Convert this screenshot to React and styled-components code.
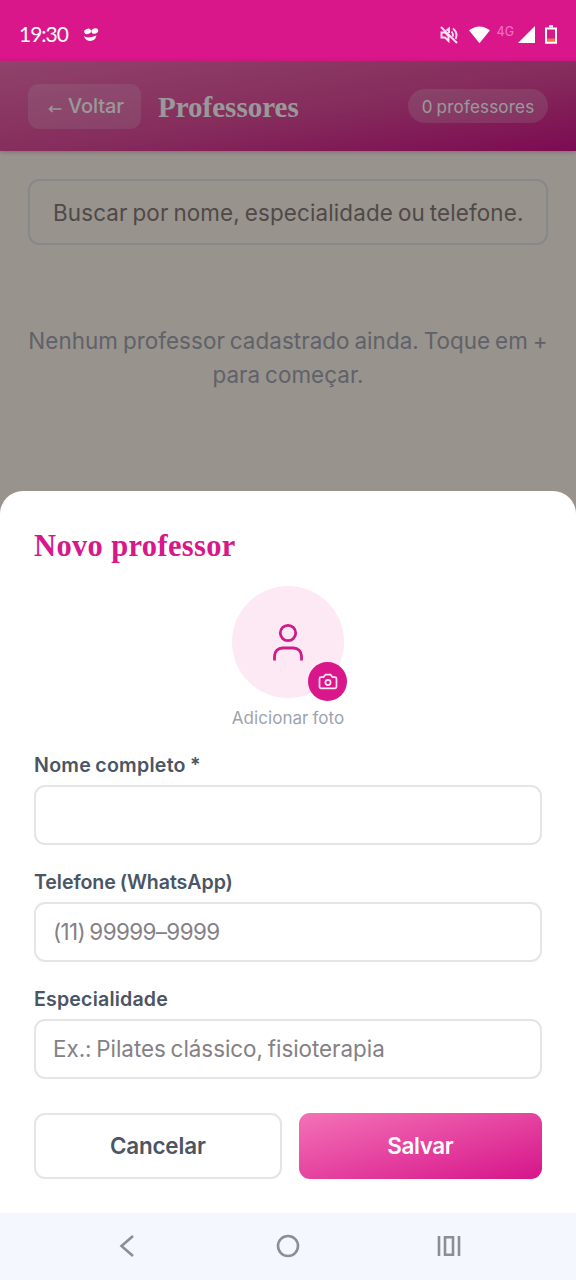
import React from "react";
import styled, { createGlobalStyle } from "styled-components";

const Global = createGlobalStyle`
  * { box-sizing: border-box; }
  body { margin: 0; font-family: Inter, "Liberation Sans", sans-serif; }
`;
const Screen = styled.div`
  width: 576px; height: 1280px; display: flex; flex-direction: column; overflow: hidden; background: #fff;
`;
const StatusBar = styled.div`
  height: 61px; background: #d9168a; color: #fff; display: flex; align-items: center;
  justify-content: space-between; padding: 8px 19px 0 19px;
`;
const StatusGroup = styled.div`display: flex; align-items: center;`;
const Clock = styled.span`
  font: 400 21px/24px Lato, sans-serif; letter-spacing: -1px; margin-right: 15px; padding-bottom: 1px;
`;
const Network = styled.span`
  font: 500 12.5px Inter, sans-serif; color: #f06cba; margin: -7px 4px 0 6px;
`;
const WifiIcon = styled.svg`margin-left: 11px;`;
const BatteryIcon = styled.svg`margin-left: 10px;`;
const Body = styled.main`flex: 1; position: relative; background: #fdf5ec;`;
const Header = styled.header`
  height: 90px; display: flex; align-items: center; padding: 0 28px;
  background: linear-gradient(to bottom right, #f070b2 0%, #de4a9a 55%, #d01288 100%);
  box-shadow: 0 1px 4px rgba(120, 20, 80, 0.3);
  color: #fff;
`;
const BackButton = styled.button`
  width: 113px; height: 45px; border: 0; border-radius: 11px; background: rgba(255,255,255,.18); color: #fff;
  display: flex; align-items: center; justify-content: center; gap: 6px; padding: 0 0 0 3px;
  font: 500 20px Inter, sans-serif; letter-spacing: -0.1px;
`;
const BackArrow = styled.svg`margin-top: 6px;`;
const PageTitle = styled.h1`
  margin: 0 auto 0 17px; padding-top: 2px; font: 700 29px "Liberation Serif", serif; letter-spacing: 0;
`;
const Count = styled.span`
  height: 34px; width: 140px; border-radius: 17px; background: rgba(255,255,255,.2);
  display: flex; align-items: center; justify-content: center; font-size: 17px; white-space: nowrap;
  padding-top: 1px; letter-spacing: 0.2px; word-spacing: -1px;
`;
const Content = styled.section`padding: 28px;`;
const SearchBox = styled.div`
  height: 66px; border: 2px solid #e0e3e7; border-radius: 11px; padding: 1px 16px 0 23px; display: flex; align-items: center;
  color: #857b77; font-size: 22.4px; white-space: nowrap; letter-spacing: 0.14px; word-spacing: -1.5px;
`;
const Empty = styled.p`
  margin: 79px -10px 0; text-align: center; color: #a0a3b0; font-size: 22.4px;
  line-height: 34px; letter-spacing: 0.07px; word-spacing: -1.5px;
`;
const Overlay = styled.div`
  position: absolute; inset: 0; background: rgba(0,0,0,.4); display: flex; align-items: flex-end;
`;
const Sheet = styled.div`
  width: 100%; height: 722px; background: #fff; border-radius: 23px 23px 0 0; padding: 34px 34px 0;
  display: flex; flex-direction: column;
`;
const SheetTitle = styled.h2`
  margin: 0; height: 41px; color: #d6188a; font: 700 30.5px/42px "Liberation Serif", serif; letter-spacing: 0.35px;
`;
const Photo = styled.div`
  margin-top: 20px; display: flex; flex-direction: column; align-items: center; height: 143px;
`;
const Avatar = styled.div`
  position: relative; width: 112px; height: 112px; border-radius: 50%; background: #fce9f3;
  display: flex; align-items: center; justify-content: center; flex: none;
`;
const Badge = styled.div`
  position: absolute; right: -3px; bottom: -3px; width: 39px; height: 39px; border-radius: 50%; background: #d9168a;
  display: flex; align-items: center; justify-content: center;
`;
const PhotoLabel = styled.span`
  margin-top: 8px; color: #9ca3af; font-size: 17px; line-height: 24px; letter-spacing: 0.05px; word-spacing: -1px;
`;
const Field = styled.label`display: block; height: 117px; padding-top: 23px;`;
const Label = styled.div`
  color: #4b5563; font-size: 19.6px; font-weight: 600; line-height: 26px; height: 33px;
  letter-spacing: ${p => p.$track}px; word-spacing: -1px;
`;
const Input = styled.div`
  height: 60px; border: 2px solid #e5e5e8; border-radius: 11px; padding: 0 17px 1px; display: flex; align-items: center;
  color: #858085; font-size: 22.4px; white-space: nowrap;
  letter-spacing: ${p => p.$track || 0}px; word-spacing: -1.5px;
`;
const Actions = styled.div`display: flex; gap: 17px; margin-top: 33px;`;
const Button = styled.button`
  height: 66px; width: ${p => (p.$primary ? 244 : 248)}px; border-radius: 11px;
  border: ${p => (p.$primary ? "0" : "2px solid #e5e5e8")};
  background: ${p => (p.$primary ? "linear-gradient(to bottom right, #f472b6, #d6158a)" : "#fff")};
  color: ${p => (p.$primary ? "#fff" : "#4b5563")};
  font: 600 22.4px Inter, sans-serif;
  letter-spacing: ${p => (p.$primary ? -0.4 : -0.15)}px; padding: 0 0 1px;
`;
const NavBar = styled.nav`
  height: 67px; background: #f4f8fe; display: flex; align-items: center; justify-content: space-between; padding: 0 112px 1px;
`;

export default function App() {
  return (
    <>
      <Global />
      <Screen>
        <StatusBar>
          <StatusGroup>
            <Clock>19:30</Clock>
            <svg width="16" height="16" viewBox="0 0 16 16" fill="#fff">
              <ellipse cx="4.6" cy="4.400" rx="3.5" ry="2.6" transform="rotate(-20 4.6 4.4)" />
              <ellipse cx="11.8" cy="4" rx="3.5" ry="2.6" transform="rotate(-20 11.8 4)" />
              <path d="M1 9Q4 12 13.500 8.500Q12.500 13.500 7 14Q2 13.500 1 9Z" />
            </svg>
          </StatusGroup>
          <StatusGroup>
            <svg width="18" height="18" viewBox="0 0 18 18" fill="none" stroke="#ffe3f5" strokeWidth="1.9">
              <path d="M1 1L17 17M1.500 6.500H5L8.500 10V15L5 11.500H1.500ZM6.500 4.500L9 2.500V7M11.500 5.500Q13.500 8 12.800 10.500M13 2.500Q18.500 7 15.500 13" />
            </svg>
            <WifiIcon width="21" height="18" viewBox="0 0 21 18" fill="#fff">
              <path d="M0 4.300Q10.500 -3.300 21 4.300L10.500 17.300Z" />
            </WifiIcon>
            <Network>4G</Network>
            <svg width="17" height="17" viewBox="0 0 17 17" fill="#fff"><path d="M17 0V17H0Z" /></svg>
            <BatteryIcon width="12" height="19" viewBox="0 0 12 19">
              <rect x="2" y="13.500" width="8" height="3.500" fill="#ff7048" />
              <path d="M4 1.200H8M1 3.500H11V17.700H1Z" fill="none" stroke="#fff" strokeWidth="2" />
            </BatteryIcon>
          </StatusGroup>
        </StatusBar>
        <Body>
          <Header>
            <BackButton>
              <BackArrow width="14" height="10" viewBox="0 0 14 10" fill="none" stroke="#fff" strokeWidth="1.600">
                <path d="M13.500 5H1.500M4.500 2L1.500 5L4.500 8" />
              </BackArrow>
              Voltar
            </BackButton>
            <PageTitle>Professores</PageTitle>
            <Count>0 professores</Count>
          </Header>
          <Content>
            <SearchBox>Buscar por nome, especialidade ou telefone.</SearchBox>
            <Empty>Nenhum professor cadastrado ainda. Toque em +<br />para começar.</Empty>
          </Content>
          <Overlay>
            <Sheet>
              <SheetTitle>Novo professor</SheetTitle>
              <Photo>
                <Avatar>
                  <svg width="32" height="40" viewBox="0 0 32 40" fill="none" stroke="#cf1b87" strokeWidth="2.800">
                    <circle cx="16" cy="11" r="7.700" />
                    <path d="M2.500 38.500V34A8 8 0 0 1 10.500 26H21.500A8 8 0 0 1 29.500 34V38.500" />
                  </svg>
                  <Badge>
                    <svg width="20" height="18" viewBox="0 0 20 18" fill="none" stroke="#ffe6f5" strokeWidth="1.700" strokeLinejoin="round">
                      <path d="M3 4.200H5.500L7.300 1.700H12.700L14.500 4.200H17Q18.500 4.200 18.500 5.700V13.800Q18.500 15.300 17 15.300H3Q1.500 15.300 1.500 13.800V5.700Q1.500 4.200 3 4.200Z" />
                      <circle cx="10" cy="9.500" r="2.600" />
                    </svg>
                  </Badge>
                </Avatar>
                <PhotoLabel>Adicionar foto</PhotoLabel>
              </Photo>
              <Field><Label $track={0.25}>Nome completo *</Label><Input /></Field>
              <Field><Label $track={-0.07}>Telefone (WhatsApp)</Label><Input $track={-0.6}>(11) 99999–9999</Input></Field>
              <Field><Label $track={0.17}>Especialidade</Label><Input $track={-0.02}>Ex.: Pilates clássico, fisioterapia</Input></Field>
              <Actions><Button>Cancelar</Button><Button $primary>Salvar</Button></Actions>
            </Sheet>
          </Overlay>
        </Body>
        <NavBar>
          <svg width="30" height="30" viewBox="0 0 30 30" fill="none" stroke="#8b8e92" strokeWidth="2.600"><path d="M21 5L9.500 15L21 25" /></svg>
          <svg width="30" height="30" viewBox="0 0 30 30" fill="none" stroke="#8b8e92" strokeWidth="2.600"><circle cx="15" cy="15" r="10" /></svg>
          <svg width="30" height="30" viewBox="0 0 30 30" fill="none" stroke="#8b8e92" strokeWidth="2.600"><path d="M5 5V25M25 5V25M11 6.300H19V23.700H11Z" /></svg>
        </NavBar>
      </Screen>
    </>
  );
}
